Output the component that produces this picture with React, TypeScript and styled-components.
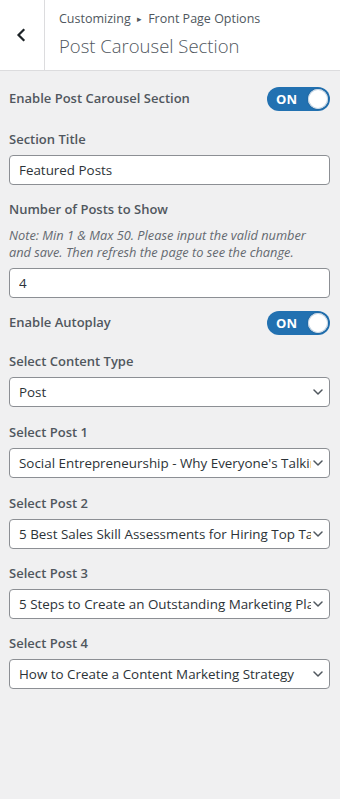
import styled, { createGlobalStyle } from 'styled-components'

const GlobalStyle = createGlobalStyle`
  html, body {
    margin: 0;
    padding: 0;
    background: #f0f0f1;
  }
  body {
    font-family: "Open Sans", "Noto Sans", "Liberation Sans", sans-serif;
    color: #50575e;
    -webkit-font-smoothing: antialiased;
  }
`

const posts = [
  "Social Entrepreneurship - Why Everyone's Talking About It",
  '5 Best Sales Skill Assessments for Hiring Top Talent',
  '5 Steps to Create an Outstanding Marketing Plan',
  'How to Create a Content Marketing Strategy',
]

// gap above each "Select Post" field
const postGaps = [15, 15, 14, 14]

function Toggle() {
  return (
    <ToggleTrack>
      <ToggleText>ON</ToggleText>
      <ToggleKnob />
    </ToggleTrack>
  )
}

function SelectField({ value }: { value: string }) {
  return (
    <SelectBox role="combobox" aria-expanded="false">
      <SelectValue>{value}</SelectValue>
      <svg width="10" height="6" viewBox="0 0 10 6" fill="none">
        <path d="M1 1l4 4 4-4" stroke="#50575e" strokeWidth="1.5" strokeLinecap="round" strokeLinejoin="round" />
      </svg>
    </SelectBox>
  )
}

export default function App() {
  return (
    <>
      <GlobalStyle />
      <Panel>
        <Header>
          <BackButton aria-label="Back">
            <svg width="10" height="14" viewBox="0 0 10 14" fill="none">
              <path d="M7.5 2L2.5 7l5 5" stroke="#1d2327" strokeWidth="2.2" strokeLinecap="square" />
            </svg>
          </BackButton>
          <HeaderTitle>
            <Breadcrumb>
              Customizing <Caret>▸</Caret> Front Page Options
            </Breadcrumb>
            <Title>Post Carousel Section</Title>
          </HeaderTitle>
        </Header>

        <Body>
          <ToggleRow $top={16}>
            <Label>Enable Post Carousel Section</Label>
            <Toggle />
          </ToggleRow>

          <Field $top={18}>
            <Label>Section Title</Label>
            <TextInput type="text" defaultValue="Featured Posts" />
          </Field>

          <Field>
            <Label>Number of Posts to Show</Label>
            <Note>
              Note: Min 1 &amp; Max 50. Please input the valid number and save. Then refresh the page to see the change.
            </Note>
            <TextInput type="number" defaultValue="4" />
          </Field>

          <ToggleRow $top={13}>
            <Label>Enable Autoplay</Label>
            <Toggle />
          </ToggleRow>

          <Field $top={16}>
            <Label>Select Content Type</Label>
            <SelectField value="Post" />
          </Field>

          {posts.map((p, i) => (
            <Field key={p} $top={postGaps[i]}>
              <Label>Select Post {i + 1}</Label>
              <SelectField value={p} />
            </Field>
          ))}
        </Body>
      </Panel>
    </>
  )
}

const Panel = styled.div`
  width: 340px;
  min-height: 799px;
  background: #f0f0f1;
`

const Header = styled.div`
  display: flex;
  height: 70px;
  background: #fff;
  border-bottom: 1px solid #dcdcde;
`

const BackButton = styled.button`
  width: 45px;
  flex-shrink: 0;
  display: flex;
  align-items: center;
  justify-content: center;
  padding: 0 2px 0 0;
  margin: 0;
  background: #fff;
  border: 0;
  border-right: 1px solid #dcdcde;
  cursor: pointer;
`

const HeaderTitle = styled.div`
  display: flex;
  flex-direction: column;
  padding: 9px 0 0 14px;
`

const Breadcrumb = styled.span`
  font-size: 12.5px;
  line-height: 20px;
  color: #50575e;
`

const Caret = styled.span`
  font-size: 9px;
  margin: 0 3px;
  vertical-align: 1px;
`

const Title = styled.h1`
  margin: 4px 0 0;
  font-size: 18.5px;
  line-height: 26px;
  font-weight: 300;
  color: #50575e;
`

const Body = styled.div`
  display: flex;
  flex-direction: column;
  padding: 0 10px 0 9px;
`

const ToggleRow = styled.div<{ $top: number }>`
  display: flex;
  align-items: center;
  justify-content: space-between;
  margin-top: ${({ $top }) => $top}px;
`

const Field = styled.div<{ $top?: number }>`
  display: flex;
  flex-direction: column;
  margin-top: ${({ $top }) => $top ?? 14}px;
`

const Label = styled.span`
  font-size: 13px;
  line-height: 20px;
  font-weight: 600;
  color: #50575e;
  margin-bottom: 6px;

  ${ToggleRow} & {
    margin-bottom: 0;
    margin-top: -2px;
  }
`

const Note = styled.p`
  margin: 2px 0 7px;
  font-size: 12.8px;
  line-height: 17px;
  font-style: italic;
  color: #646970;
`

const TextInput = styled.input`
  box-sizing: border-box;
  width: 100%;
  height: 30px;
  margin: 0;
  padding: 0 9px;
  font-family: inherit;
  font-size: 13.4px;
  color: #2c3338;
  background: #fff;
  border: 1px solid #8c8f94;
  border-radius: 4px;
  -moz-appearance: textfield;

  &::-webkit-outer-spin-button,
  &::-webkit-inner-spin-button {
    -webkit-appearance: none;
    margin: 0;
  }
`

const SelectBox = styled.div`
  box-sizing: border-box;
  display: flex;
  align-items: center;
  gap: 2px;
  width: 100%;
  height: 30px;
  padding: 0 6px 0 9px;
  background: #fff;
  border: 1px solid #8c8f94;
  border-radius: 4px;
  cursor: pointer;

  svg {
    flex-shrink: 0;
  }
`

const SelectValue = styled.span`
  flex: 1;
  min-width: 0;
  overflow: hidden;
  white-space: nowrap;
  font-size: 13.4px;
  line-height: 28px;
  color: #2c3338;
`

const ToggleTrack = styled.div`
  position: relative;
  box-sizing: border-box;
  width: 63px;
  height: 24px;
  border-radius: 12px;
  background: #2271b1;
  display: flex;
  align-items: center;
`

const ToggleText = styled.span`
  margin-left: 9px;
  font-size: 13px;
  font-weight: 700;
  color: #fff;
  letter-spacing: 0.2px;
`

const ToggleKnob = styled.span`
  position: absolute;
  right: 2px;
  top: 2px;
  width: 20px;
  height: 20px;
  box-sizing: border-box;
  border-radius: 50%;
  background: #fff;
  box-shadow: inset 0 0 0 1px #c3d4e4, 0 0 2px rgba(0, 0, 0, 0.25);
`
